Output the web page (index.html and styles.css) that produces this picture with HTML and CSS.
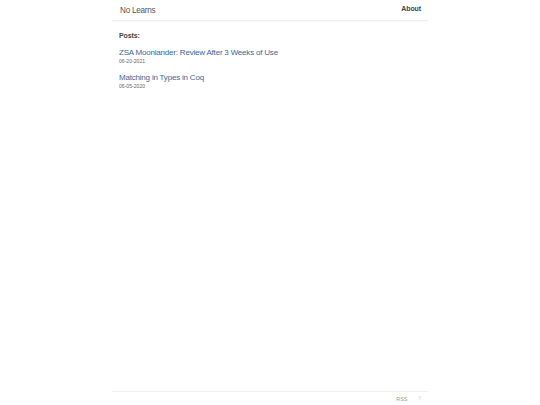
FILE: index.html
```html
<!DOCTYPE html>
<html>
<head>
<meta charset="utf-8">
<link rel="stylesheet" href="styles.css">
</head>
<body>
<div class="page">
  <header class="header">
    <span class="brand">No Learns</span>
    <a class="nav" href="#">About</a>
  </header>
  <main class="main">
    <div class="posts-title">Posts:</div>
    <div class="post">
      <a class="post-link" href="#">ZSA Moonlander: Review After 3 Weeks of Use</a>
      <div class="post-date">06-20-2021</div>
    </div>
    <div class="post">
      <a class="post-link" href="#">Matching in Types in Coq</a>
      <div class="post-date">06-05-2020</div>
    </div>
  </main>
  <footer class="footer">
    <span class="foot-item">RSS</span>
    <span class="foot-item small">!!</span>
  </footer>
</div>
</body>
</html>
```
FILE: styles.css
```css
html, body { margin: 0; padding: 0; background: #fff; }
body { font-family: "Liberation Sans", Arial, sans-serif; -webkit-font-smoothing: antialiased; }
.page { width: 316px; margin: 0 auto; height: 405px; display: flex; flex-direction: column; }
.header { height: 21px; display: flex; justify-content: space-between; align-items: flex-start; box-sizing: border-box; padding: 0 7px 0 8px; border-bottom: 1px solid #f0f0f0; box-shadow: 0 1px 1px rgba(0,0,0,0.02); }
.brand { font-size: 8.2px; letter-spacing: -0.28px; color: #555; margin-top: 5px; line-height: 11px; }
.nav { font-size: 7px; letter-spacing: -0.1px; font-weight: bold; color: #444; text-decoration: none; margin-top: 4px; line-height: 10px; }
.main { flex: 1; padding: 10px 7px 0 7px; }
.posts-title { font-size: 7px; letter-spacing: -0.1px; font-weight: bold; color: #444; line-height: 9px; margin-bottom: 7px; }
.post { margin-bottom: 7px; }
.post-link { font-size: 8px; letter-spacing: -0.2px; color: #3a6898; text-decoration: none; line-height: 11px; display: block; }
.post-date { font-size: 5.1px; color: #666; line-height: 7px; }
.footer { height: 13px; border-top: 1px solid #f0f0f0; display: flex; justify-content: flex-end; align-items: center; gap: 11px; padding-right: 7px; }
.foot-item { font-size: 5.5px; color: #999; }
.foot-item.small { font-size: 4.5px; color: #bbb; }
```
